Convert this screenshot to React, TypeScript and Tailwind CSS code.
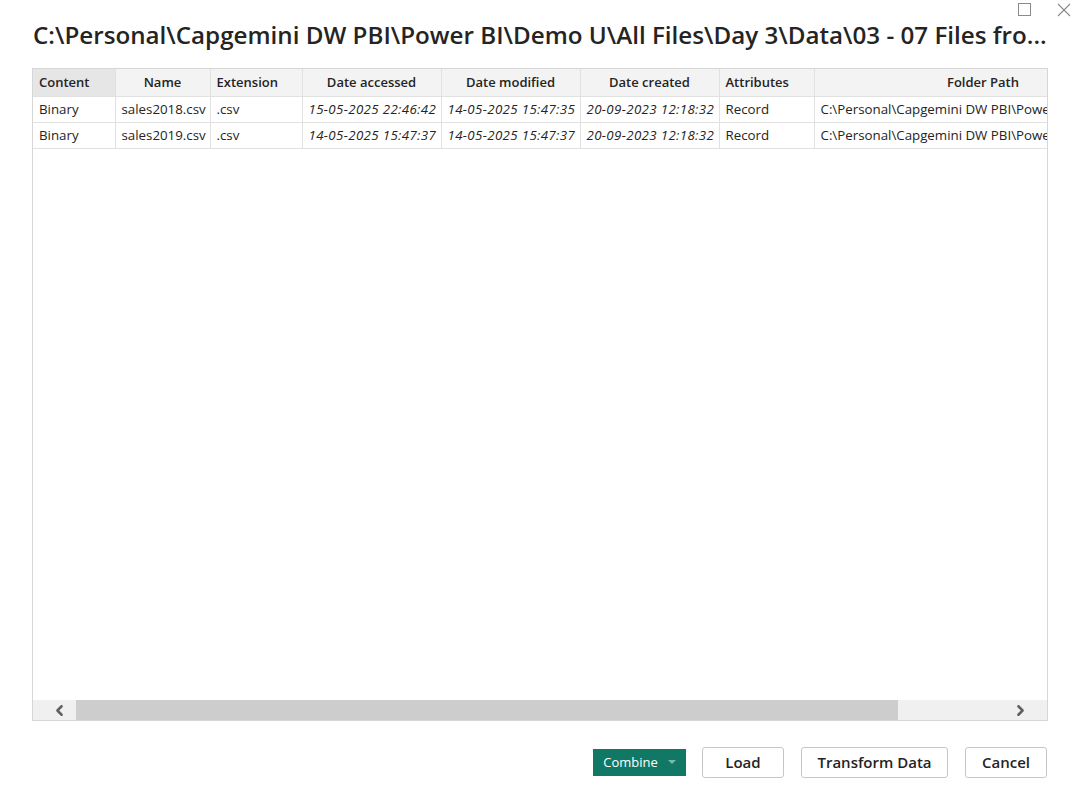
import { ChevronLeft, ChevronRight } from 'lucide-react';

const COLUMNS = [
  { label: 'Content', width: 82, align: 'text-left' },
  { label: 'Name', width: 95, align: 'text-center' },
  { label: 'Extension', width: 92, align: 'text-left' },
  { label: 'Date accessed', width: 139, align: 'text-center' },
  { label: 'Date modified', width: 139, align: 'text-center' },
  { label: 'Date created', width: 139, align: 'text-center' },
  { label: 'Attributes', width: 95, align: 'text-left' },
  { label: 'Folder Path', width: 338, align: 'text-center' },
];

const ROWS = [
  ['Binary', 'sales2018.csv', '.csv', '15-05-2025 22:46:42', '14-05-2025 15:47:35', '20-09-2023 12:18:32', 'Record', 'C:\\Personal\\Capgemini DW PBI\\Powe'],
  ['Binary', 'sales2019.csv', '.csv', '14-05-2025 15:47:37', '14-05-2025 15:47:37', '20-09-2023 12:18:32', 'Record', 'C:\\Personal\\Capgemini DW PBI\\Powe'],
];

const ITALIC = [3, 4, 5];

export default function App() {
  return (
    <div
      className="w-[1074px] h-[786px] bg-white flex flex-col overflow-hidden text-[#252423]"
      style={{ fontFamily: '"Open Sans", "Noto Sans", sans-serif' }}
    >
      <div className="flex justify-end gap-[26px] pr-[3px] pt-[2px] h-[20px]">
        <div className="w-[13px] h-[13px] border border-[#8a8a8a] mt-[1px]" />
        <svg width="14" height="14" viewBox="0 0 14 14" className="mt-[1px]">
          <path d="M1 1 L13 13 M13 1 L1 13" stroke="#8a8a8a" strokeWidth="1.1" />
        </svg>
      </div>

      <h1 className="px-[33px] text-[24.2px] leading-[30px] font-semibold whitespace-nowrap">
        C:\Personal\Capgemini DW PBI\Power BI\Demo U\All Files\Day 3\Data\03 - 07 Files fro...
      </h1>

      <div className="ml-[32px] w-[1016px] mt-[18px] h-[653px] border border-[#d6d6d6] flex flex-col">
        <div className="flex-1 overflow-hidden">
          <table className="table-fixed border-collapse w-[1119px]">
            <colgroup>
              {COLUMNS.map((c) => (
                <col key={c.label} style={{ width: c.width }} />
              ))}
            </colgroup>
            <thead>
              <tr className="h-[27px]">
                {COLUMNS.map((c, i) => (
                  <th
                    key={c.label}
                    className={`${c.align} text-[13px] font-semibold px-[6px] border-r border-b border-[#e1e1e1] whitespace-nowrap ${i === 0 ? 'bg-[#e6e6e6]' : 'bg-[#f3f3f3]'}`}
                  >
                    {c.label}
                  </th>
                ))}
              </tr>
            </thead>
            <tbody>
              {ROWS.map((row) => (
                <tr key={row[1]} className="h-[26px]">
                  {row.map((cell, i) => (
                    <td
                      key={i}
                      className={`px-[6px] pt-[1px] text-[13.3px] border-r border-b border-[#e1e1e1] whitespace-nowrap overflow-hidden ${ITALIC.includes(i) ? 'italic tracking-[0.35px]' : ''}`}
                    >
                      {cell}
                    </td>
                  ))}
                </tr>
              ))}
            </tbody>
          </table>
        </div>

        <div className="h-[20px] bg-[#f0f0f0] flex items-center">
          <div className="w-[43px] flex justify-start pl-[18px] text-[#606060]">
            <ChevronLeft size={17} strokeWidth={3.5} />
          </div>
          <div className="h-full w-[822px] bg-[#cdcdcd]" />
          <div className="flex-1" />
          <div className="w-[50px] flex justify-start pl-[15px] text-[#606060]">
            <ChevronRight size={17} strokeWidth={3.5} />
          </div>
        </div>
      </div>

      <div className="flex justify-end items-center mr-[27px] mt-[26px] gap-[17px]">
        <button className="h-[27px] w-[93px] bg-[#117865] text-white text-[13px] flex items-center justify-center gap-[10px] mr-[-1px]">
          <span>Combine</span>
          <svg width="8" height="5" viewBox="0 0 8 5">
            <path d="M0 0 L8 0 L4 4 Z" fill="#7fb5aa" />
          </svg>
        </button>
        <button className="h-[31px] w-[82px] border border-[#c8c6c4] rounded-[3px] text-[15px] font-semibold">
          Load
        </button>
        <button className="h-[31px] w-[147px] border border-[#c8c6c4] rounded-[3px] text-[15px] font-semibold">
          Transform Data
        </button>
        <button className="h-[31px] w-[82px] border border-[#c8c6c4] rounded-[3px] text-[15px] font-semibold">
          Cancel
        </button>
      </div>
    </div>
  );
}
